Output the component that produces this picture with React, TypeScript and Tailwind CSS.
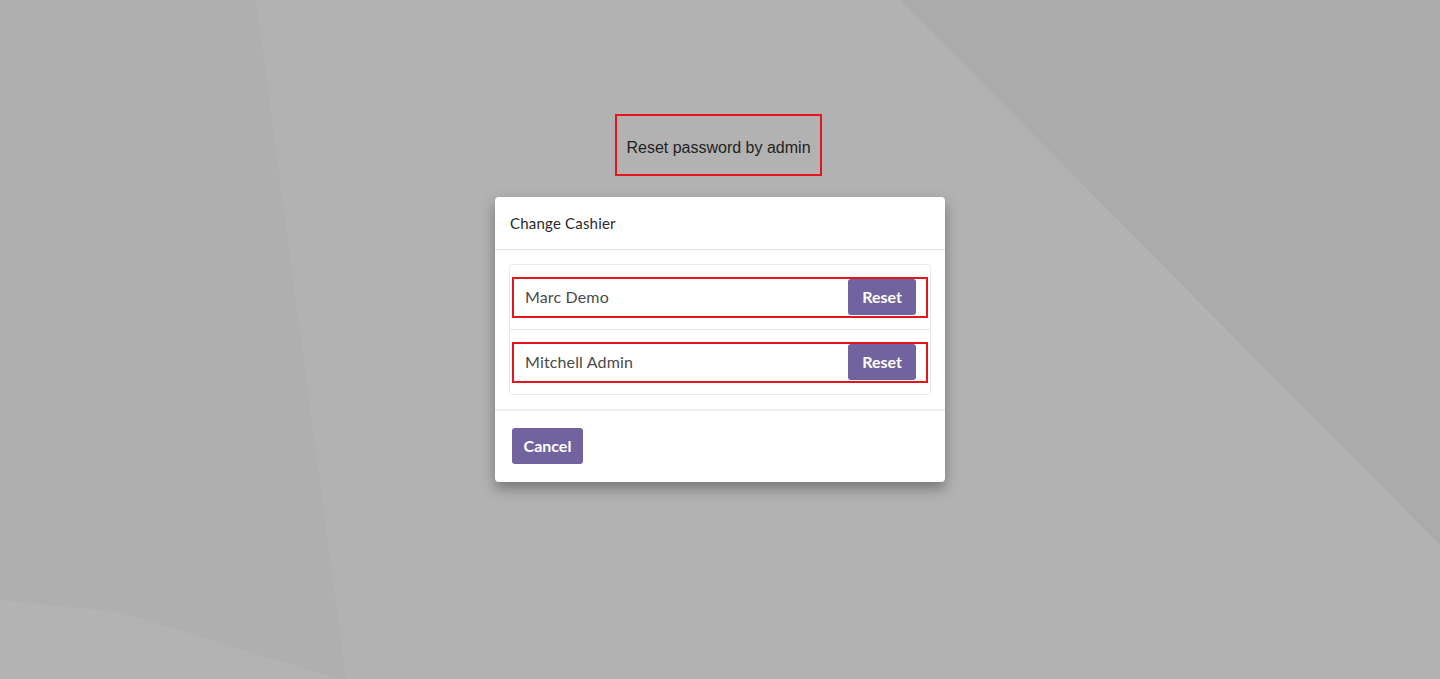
const cashiers = ["Marc Demo", "Mitchell Admin"];

function Backdrop() {
  return (
    <svg
      className="absolute inset-0 w-full h-full"
      viewBox="0 0 1440 679"
      preserveAspectRatio="none"
    >
      <rect width="1440" height="679" fill="#b2b2b2" />
      <polygon points="0,0 256,0 346,679 0,679" fill="#afafaf" />
      <polygon points="0,600 120,612 250,652 340,679 0,679" fill="#b3b3b3" />
      <polygon points="900,0 1440,0 1440,545" fill="#ababab" />
    </svg>
  );
}

export default function App() {
  return (
    <div className="relative w-full h-[679px] overflow-hidden font-['Lato','Noto_Sans',sans-serif]">
      <Backdrop />

      <div className="relative flex flex-col items-center pt-[114px]">
        {/* annotation */}
        <div className="mr-[3px] w-[207px] h-[62px] border-2 border-[#e4161b] flex items-center justify-center">
          <span className="font-['Liberation_Sans',Arial,sans-serif] text-[16px] text-[#1f1f1f] pt-[6px]">
            Reset password by admin
          </span>
        </div>

        {/* modal */}
        <div className="mt-[21px] w-[450px] bg-white rounded-[4px] shadow-[0_6px_14px_rgba(0,0,0,0.35)]">
          <div className="h-[53px] px-[15px] flex items-center border-b border-[#e3e3e3]">
            <h4 className="text-[15px] tracking-[0.2px] text-[#2b2b2b]">Change Cashier</h4>
          </div>

          <div className="p-[14px]">
            <div className="border border-[#e9e9e9] rounded-[3px]">
              {cashiers.map((name, i) => (
                <div
                  key={name}
                  className={
                    i > 0
                      ? "h-[65px] flex items-center px-[2px] border-t border-[#e6e6e6]"
                      : "h-[64px] flex items-center px-[2px]"
                  }
                >
                  <div className="flex-1 h-[41px] border-2 border-[#e4161b] flex items-center justify-between pl-[11px] pr-[10px]">
                    <span className="text-[16px] tracking-[0.15px] text-[#4a4a4a]">{name}</span>
                    <button className="w-[68px] h-[36px] rounded-[3px] bg-[#71639e] text-white font-bold text-[16px]">
                      Reset
                    </button>
                  </div>
                </div>
              ))}
            </div>
          </div>

          <div className="border-t-2 border-[#eeeeee] px-[17px] pt-[17px] pb-[18px]">
            <button className="w-[71px] h-[36px] rounded-[3px] bg-[#71639e] text-white font-bold text-[16px]">
              Cancel
            </button>
          </div>
        </div>
      </div>
    </div>
  );
}
